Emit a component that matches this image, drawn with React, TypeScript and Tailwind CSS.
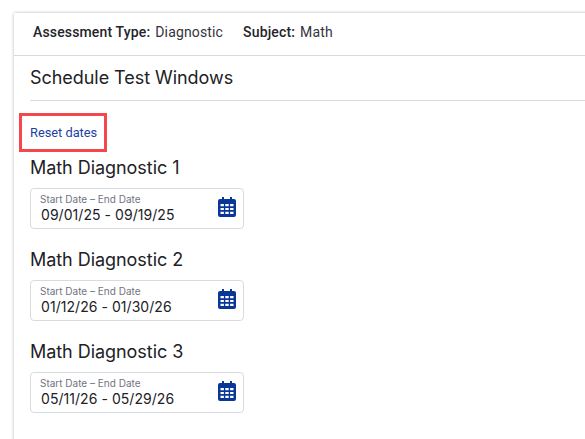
const tests = [
  { title: "Math Diagnostic 1", dates: "09/01/25 - 09/19/25" },
  { title: "Math Diagnostic 2", dates: "01/12/26 - 01/30/26" },
  { title: "Math Diagnostic 3", dates: "05/11/26 - 05/29/26" },
];

function CalendarIcon() {
  return (
    <svg width="18" height="20" viewBox="0 0 18 20" className="mb-[2px] shrink-0">
      <path
        fill="#0a3697"
        fillRule="evenodd"
        d="M4 0h2v2h6V0h2v2h2a2 2 0 0 1 2 2v14a2 2 0 0 1-2 2H2a2 2 0 0 1-2-2V4a2 2 0 0 1 2-2h2V0ZM2.5 7v2.2h3.4V7H2.5Zm4.8 0v2.2h3.4V7H7.3Zm4.8 0v2.2h3.4V7h-3.4ZM2.5 10.9v2.2h3.4v-2.2H2.5Zm4.8 0v2.2h3.4v-2.2H7.3Zm4.8 0v2.2h3.4v-2.2h-3.4ZM2.5 14.8V17h3.4v-2.2H2.5Zm4.8 0V17h3.4v-2.2H7.3Zm4.8 0V17h3.4v-2.2h-3.4Z"
      />
    </svg>
  );
}

export default function App() {
  return (
    <div className="h-[439px] w-[585px] overflow-hidden bg-white pl-[14px] pt-[13px] font-['Inter',sans-serif]">
      <div className="h-[460px] w-[600px] bg-white shadow-[0_0_3px_rgba(0,0,0,0.3)]">
        <div className="flex h-[43px] items-center gap-5 border-b border-[#d9d9d9] pb-1 pl-[19px] font-['Roboto',sans-serif] text-sm tracking-[0.15px] text-[#33333b]">
          <div className="flex gap-[5px]">
            <span className="font-medium text-[#24242a]">Assessment Type:</span>
            <span>Diagnostic</span>
          </div>
          <div className="flex gap-[5px]">
            <span className="font-medium text-[#24242a]">Subject:</span>
            <span>Math</span>
          </div>
        </div>

        <div className="pl-[16px]">
          <h1 className="flex h-[45px] items-center border-b border-[#d9d9d9] text-lg font-normal tracking-[-0.05px] text-[#212126]">
            Schedule Test Windows
          </h1>

          <div className="-ml-[11px] mt-[12px] flex h-[39px] w-[88px] items-center border-[3px] border-[#f4474c] pl-[8px] font-['Roboto',sans-serif] text-[12.8px] text-[#1a3fa6]">
            Reset dates
          </div>

          <div className="flex flex-col gap-[15px]">
            {tests.map((test) => (
              <section key={test.title}>
                <h2 className="flex h-[32px] items-center text-lg font-normal tracking-[-0.05px] text-[#212126]">
                  {test.title}
                </h2>
                <div className="mt-[4px] flex h-[41px] w-[214px] items-center justify-between rounded border border-[#d9dbe3] pb-px pl-[9px] pr-[7px]">
                  <div className="flex flex-col">
                    <span className="text-[10px] leading-[13px] text-[#73737f]">Start Date – End Date</span>
                    <span className="pl-px text-sm leading-[17px] tracking-[0.05px] text-[#212126]">{test.dates}</span>
                  </div>
                  <CalendarIcon />
                </div>
              </section>
            ))}
          </div>
        </div>
      </div>
    </div>
  );
}
